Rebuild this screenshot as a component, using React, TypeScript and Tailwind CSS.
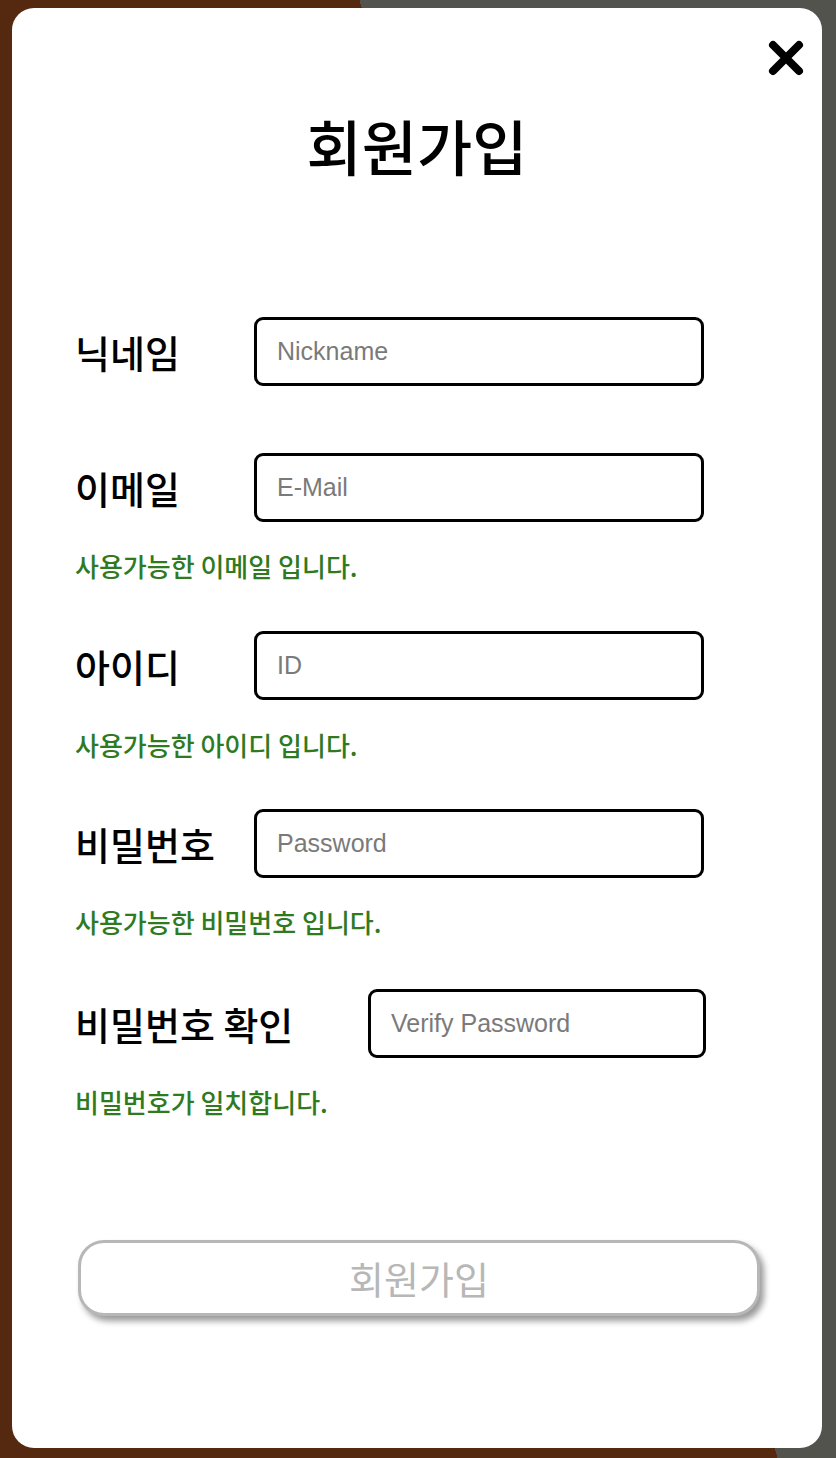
const font = "font-['Noto_Sans_CJK_KR','Noto_Sans',sans-serif]";

type Field = {
  label: string;
  placeholder: string;
  type: string;
  message?: string;
  labelWidth: string;
  inputWidth: string;
  gap: string;
  msgGap: string;
};

const fields: Field[] = [
  { label: '닉네임', placeholder: 'Nickname', type: 'text', labelWidth: 'w-[179px]', inputWidth: 'w-[450px]', gap: 'mt-[132px]', msgGap: '' },
  { label: '이메일', placeholder: 'E-Mail', type: 'email', message: '사용가능한 이메일 입니다.', labelWidth: 'w-[179px]', inputWidth: 'w-[450px]', gap: 'mt-[67px]', msgGap: 'mt-[28px]' },
  { label: '아이디', placeholder: 'ID', type: 'text', message: '사용가능한 아이디 입니다.', labelWidth: 'w-[179px]', inputWidth: 'w-[450px]', gap: 'mt-[49px]', msgGap: 'mt-[29px]' },
  { label: '비밀번호', placeholder: 'Password', type: 'password', message: '사용가능한 비밀번호 입니다.', labelWidth: 'w-[179px]', inputWidth: 'w-[450px]', gap: 'mt-[48px]', msgGap: 'mt-[28px]' },
  { label: '비밀번호 확인', placeholder: 'Verify Password', type: 'password', message: '비밀번호가 일치합니다.', labelWidth: 'w-[293px]', inputWidth: 'w-[338px]', gap: 'mt-[51px]', msgGap: 'mt-[28px]' },
];

function CloseIcon() {
  return (
    <svg width="36" height="36" viewBox="0 0 36 36" fill="none">
      <path d="M5 5 L31 31 M31 5 L5 31" stroke="#000" strokeWidth="8" strokeLinecap="round" />
    </svg>
  );
}

export default function App() {
  return (
    <div className="min-h-[1458px] w-full bg-[linear-gradient(74deg,#55290f_62%,#53534e_62%)] pt-2 pl-3">
      <div className={`relative w-[810px] h-[1440px] rounded-[22px] bg-white ${font}`}>
        <button className="absolute top-[32px] right-[18px]" aria-label="닫기">
          <CloseIcon />
        </button>

        <h1 className="pt-[97px] h-[177px] text-center text-[60px] leading-[80px] font-medium text-black">
          회원가입
        </h1>

        <form className="px-[63px]">
          {fields.map((f) => (
            <div key={f.label}>
              <div className={`flex items-center ${f.gap}`}>
                <label className={`${f.labelWidth} shrink-0 text-[38px] leading-[44px] font-medium text-black`}>
                  {f.label}
                </label>
                <input
                  type={f.type}
                  placeholder={f.placeholder}
                  className={`${f.inputWidth} shrink-0 h-[69px] rounded-[9px] border-[3px] border-black bg-white pl-5 text-[25px] font-['Liberation_Sans',sans-serif] placeholder:text-[#7a7a7a] outline-none`}
                />
              </div>
              {f.message && (
                <p className={`${f.msgGap} text-[26px] leading-[32px] font-medium text-[#2f7a1f]`}>{f.message}</p>
              )}
            </div>
          ))}

          <button
            type="button"
            className="mt-[122px] ml-[3px] w-[682px] h-[76px] rounded-[26px] border-[3px] border-[#b7b7b7] bg-white text-[38px] leading-[44px] text-[#b7b7b7] shadow-[4px_5px_6px_rgba(0,0,0,0.4)]"
          >
            회원가입
          </button>
        </form>
      </div>
    </div>
  );
}
